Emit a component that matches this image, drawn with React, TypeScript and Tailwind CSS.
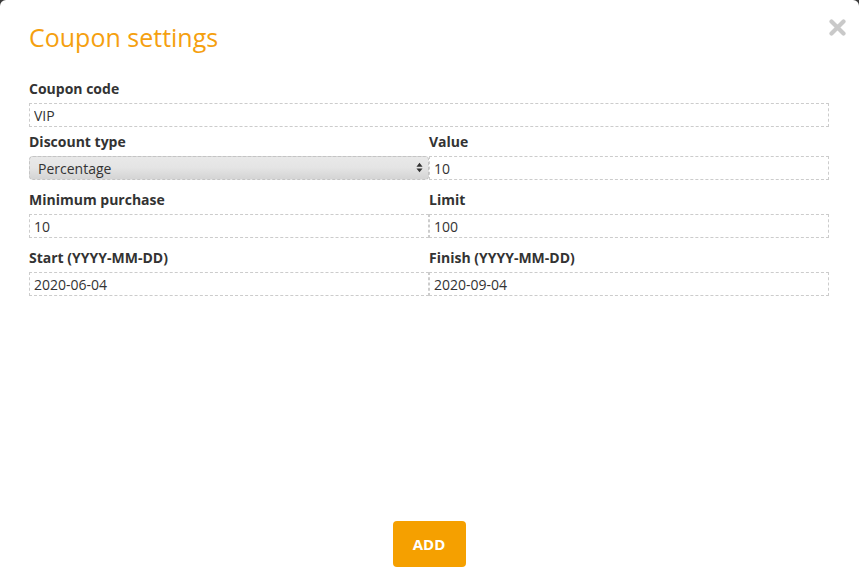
import React from 'react';

const inputCls =
  'block w-full h-[24px] border border-dashed border-[#cccccc] bg-white px-[4px] text-[14px] text-[#333] outline-none';

const Field = ({ label, value }: { label: string; value: string }) => (
  <div>
    <label className="block h-[18px] leading-[18px] text-[14px] font-bold text-[#333] mb-[5px]">{label}</label>
    <input className={inputCls} defaultValue={value} readOnly />
  </div>
);

const App = () => {
  return (
    <div className="h-[581px] w-full bg-[#3a3a3a] overflow-hidden" style={{ fontFamily: '"Open Sans", Arial, sans-serif' }}>
      <div className="relative flex flex-col h-full bg-white rounded-t-[6px] pl-[29px] pr-[30px]">
        <button className="absolute top-[19px] right-[13px] w-[17px] h-[17px]">
          <svg viewBox="0 0 17 17" className="w-[17px] h-[17px]">
            <path d="M2.5 2.5 L14.5 14.5 M14.5 2.5 L2.5 14.5" stroke="#c9c9c9" strokeWidth="4.2" strokeLinecap="round" />
          </svg>
        </button>

        <h1 className="mt-[21px] h-[32px] leading-[32px] text-[25px] font-normal text-[#f5a00f]">Coupon settings</h1>

        <div className="mt-[27px]">
          <Field label="Coupon code" value="VIP" />
        </div>

        <div className="grid grid-cols-2 mt-[6px] gap-y-[11px]">
          <div>
            <label className="block h-[18px] leading-[18px] text-[14px] font-bold text-[#333] mb-[5px]">Discount type</label>
            <div className="relative">
              <select
                className="block w-full h-[24px] appearance-none rounded-[4px] border border-dashed border-[#c4c4c4] bg-gradient-to-b from-[#e9e9e9] via-[#e4e4e4] to-[#d4d4d4] pl-[8px] text-[14px] text-[#333] outline-none"
                defaultValue="Percentage"
              >
                <option>Percentage</option>
                <option>Fixed amount</option>
              </select>
              <svg viewBox="0 0 8 12" className="absolute right-[6px] top-[6px] w-[7px] h-[11px] pointer-events-none">
                <path d="M4 0.5 L7.5 5 L0.5 5 Z M4 11.5 L7.5 7 L0.5 7 Z" fill="#333" />
              </svg>
            </div>
          </div>
          <Field label="Value" value="10" />
          <Field label="Minimum purchase" value="10" />
          <Field label="Limit" value="100" />
          <Field label="Start (YYYY-MM-DD)" value="2020-06-04" />
          <Field label="Finish (YYYY-MM-DD)" value="2020-09-04" />
        </div>

        <div className="mt-auto mb-[14px] flex justify-center">
          <button className="w-[73px] h-[46px] rounded-[4px] bg-[#f5a000] text-white text-[15px] font-bold">ADD</button>
        </div>
      </div>
    </div>
  );
};

export default App;
